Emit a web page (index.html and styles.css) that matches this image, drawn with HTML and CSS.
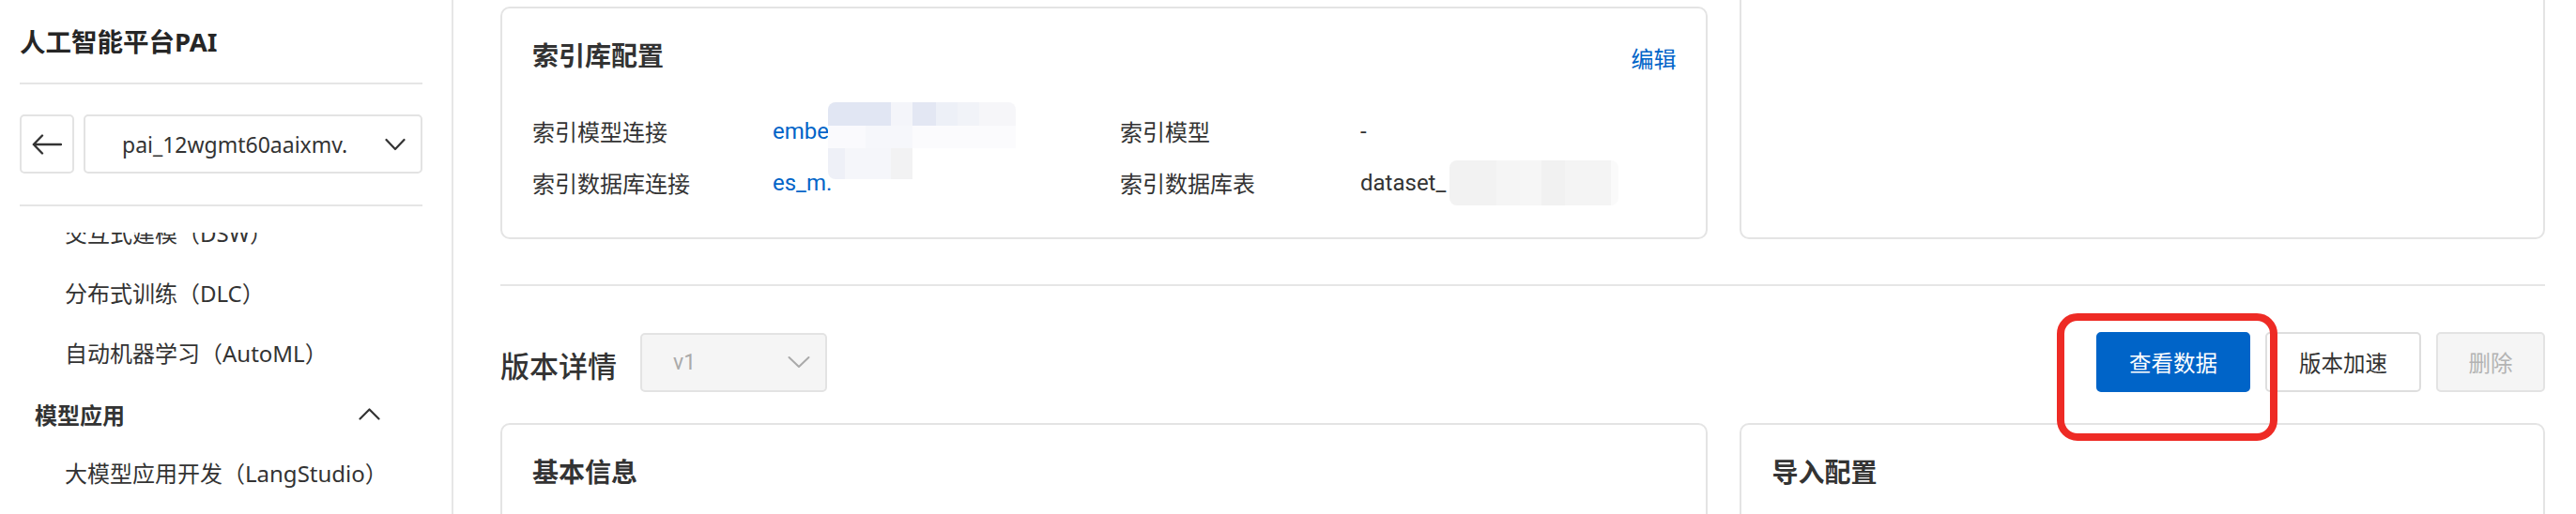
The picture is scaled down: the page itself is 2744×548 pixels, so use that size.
FILE: index.html
```html
<!DOCTYPE html>
<html lang="zh-CN">
<head>
    <meta charset="UTF-8">
    <meta name="viewport" content="width=device-width, initial-scale=1.0">
    <title>人工智能平台PAI - 数据集详情</title>
    <link rel="stylesheet" href="styles.css">
</head>
<body>
    <aside class="sidebar">
        <div class="brand">人工智能平台PAI</div>
        <div class="switcher">
            <button class="back-btn">
                <svg width="32" height="22" viewBox="0 0 32 22"><path d="M31 11H2M11 1.5L1.8 11l9.2 9.5" fill="none" stroke="#333" stroke-width="2.4" stroke-linecap="round" stroke-linejoin="round"/></svg>
            </button>
            <div class="ws-select">
                <span class="ws-name">pai_12wgmt60aaixmv.</span>
                <svg width="22" height="14" viewBox="0 0 22 14"><path d="M1.5 2l9.5 10 9.5-10" fill="none" stroke="#333" stroke-width="2.2" stroke-linecap="round" stroke-linejoin="round"/></svg>
            </div>
        </div>
        <nav class="menu">
            <ul class="menu-list">
                <li class="menu-item">交互式建模（DSW）</li>
                <li class="menu-item">分布式训练（DLC）</li>
                <li class="menu-item">自动机器学习（AutoML）</li>
                <li class="menu-group">
                    <span>模型应用</span>
                    <svg width="23" height="13" viewBox="0 0 23 13"><path d="M1.5 11.5l10-10 10 10" fill="none" stroke="#333" stroke-width="2.2" stroke-linecap="round" stroke-linejoin="round"/></svg>
                </li>
                <li class="menu-item">大模型应用开发（LangStudio）</li>
            </ul>
        </nav>
    </aside>

    <main class="main">
        <div class="top-row">
            <section class="card card-index">
                <div class="card-head">
                    <h3 class="card-title">索引库配置</h3>
                    <a class="link">编辑</a>
                </div>
                <div class="info-grid">
                    <div class="info-cell">
                        <span class="info-label">索引模型连接</span>
                        <span class="info-value link">embe<span class="mask mask-model"></span></span>
                    </div>
                    <div class="info-cell">
                        <span class="info-label">索引模型</span>
                        <span class="info-value">-</span>
                    </div>
                    <div class="info-cell">
                        <span class="info-label">索引数据库连接</span>
                        <span class="info-value link">es_m.</span>
                    </div>
                    <div class="info-cell">
                        <span class="info-label">索引数据库表</span>
                        <span class="info-value">dataset_<span class="mask mask-table"></span></span>
                    </div>
                </div>
            </section>
            <section class="card card-side"></section>
        </div>

        <div class="divider"></div>

        <div class="version-bar">
            <h2 class="version-title">版本详情</h2>
            <div class="version-select">
                <span>v1</span>
                <svg width="24" height="14" viewBox="0 0 24 14"><path d="M1.5 2l10.5 10 10.5-10" fill="none" stroke="#aaa" stroke-width="2" stroke-linecap="round" stroke-linejoin="round"/></svg>
            </div>
            <div class="actions">
                <span class="mark-wrap">
                    <button class="btn btn-primary">查看数据</button>
                    <span class="mark"></span>
                </span>
                <button class="btn">版本加速</button>
                <button class="btn btn-disabled">删除</button>
            </div>
        </div>

        <div class="bottom-row">
            <section class="card card-low">
                <div class="card-head">
                    <h3 class="card-title">基本信息</h3>
                </div>
            </section>
            <section class="card card-low">
                <div class="card-head">
                    <h3 class="card-title">导入配置</h3>
                </div>
            </section>
        </div>
    </main>
</body>
</html>
```

FILE: styles.css
```css
* { box-sizing: border-box; }
body { margin: 0; height: 548px; overflow: hidden; display: flex; background: #fff; color: #333; font-family: "Noto Sans", "Noto Sans CJK SC", sans-serif; }
ul { list-style: none; margin: 0; padding: 0; }
h2, h3 { margin: 0; }

/* sidebar */
.sidebar { width: 483px; flex-shrink: 0; border-right: 2px solid #e6e6e6; padding: 0 31px 0 21px; display: flex; flex-direction: column; }
.brand { height: 90px; border-bottom: 2px solid #e5e5e5; display: flex; align-items: center; padding-bottom: 2px; font-size: 27.5px; font-weight: 700; color: #262626; }
.switcher { display: flex; gap: 10px; padding: 32px 0 33px; border-bottom: 2px solid #e5e5e5; }
.back-btn { width: 58px; height: 63px; background: #fff; border: 2px solid #e3e3e3; border-radius: 5px; display: flex; align-items: center; justify-content: center; padding: 0; }
.ws-select { flex: 1; height: 63px; border: 2px solid #e3e3e3; border-radius: 5px; display: flex; align-items: center; justify-content: space-between; padding: 0 16px 0 39px; font-size: 23px; color: #333; }
.menu { margin-top: 28px; flex: 1; overflow: hidden; }
.menu-list { margin-top: -31px; font-size: 24px; }
.menu-item { height: 64px; line-height: 64px; padding-left: 48px; color: #333; white-space: nowrap; }
.menu-group { height: 64px; display: flex; align-items: center; justify-content: space-between; padding: 0 45px 0 16px; font-weight: 700; color: #333; }

/* main */
.main { flex: 1; height: 548px; overflow: hidden; padding: 0 33px 0 50px; font-family: Roboto, "Noto Sans CJK SC", sans-serif; }
.top-row { display: grid; grid-template-columns: 3fr 2fr; gap: 34px; margin-top: -20px; }
.card { border: 2px solid #e4e4e4; border-radius: 10px; background: #fff; padding: 0 32px; }
.card-index { margin-top: 27px; height: 248px; }
.card-head { display: flex; justify-content: space-between; align-items: center; padding-top: 34px; height: 70px; }
.card-title { font-size: 28px; font-weight: 600; line-height: 36px; color: #333; }
.link { color: #0064c8; font-size: 24px; text-decoration: none; }
.info-grid { display: grid; grid-template-columns: 626px 1fr; margin-top: 33px; font-size: 24px; }
.info-cell { display: flex; height: 55px; align-items: center; }
.info-label { width: 256px; flex-shrink: 0; color: #333; }
.info-value { position: relative; color: #333; }
.info-value.link { color: #0064c8; }

/* pixelated masking over hidden values */
.mask { position: absolute; border-radius: 8px; }
.mask-model { left: 59px; top: -17px; width: 200px; height: 82px;
    background:
        linear-gradient(to right, #e1e6f3 0 67px, #f4f5fa 67px 90px, #e3e7f3 90px 115px, #edf0f7 115px 138px, #f1f3f8 138px 161px, #f6f6f9 161px) 0 0 / 100% 25px no-repeat,
        linear-gradient(to right, #fafafd 0 40px, #f6f7fb 40px 90px, #fbfbfd 90px) 0 25px / 100% 24px no-repeat,
        linear-gradient(to right, #eef0f7 0 18px, #f5f6fa 18px 67px, #f2f2f3 67px 90px, transparent 90px) 0 49px / 100% 33px no-repeat; }
.mask-table { left: 95px; top: -10px; width: 180px; height: 48px;
    background: linear-gradient(to right, #f2f2f2 0 50px, #f5f5f5 50px 75px, #f6f6f6 75px 98px, #f1f1f1 98px 123px, #f4f4f4 123px 172px, #fafafa 172px); }

.divider { height: 2px; background: #e6e6e6; margin-top: 48px; }

.version-bar { display: flex; align-items: center; height: 64px; margin-top: 49px; }
.version-title { font-size: 31px; font-weight: 500; color: #333; padding-top: 5px; }
.version-select { width: 199px; height: 63px; margin-left: 25px; background: #f5f5f5; border: 2px solid #e3e3e3; border-radius: 5px; display: flex; align-items: center; justify-content: space-between; padding: 0 16px 0 33px; font-size: 23px; color: #aaa; }
.actions { margin-left: auto; display: flex; gap: 16px; }
.btn { height: 64px; min-width: 116px; padding: 0 34px; border: 2px solid #dedede; border-radius: 5px; background: #fff; color: #333; font-size: 23.5px; white-space: nowrap; font-family: Roboto, "Noto Sans CJK SC", sans-serif; }
.btn-primary { background: #0064c8; border-color: #0064c8; color: #fff; width: 164px; padding: 0; }
.btn-disabled { background: #f5f5f5; border-color: #e3e3e3; color: #b3b3b3; padding: 0; }
.mark-wrap { position: relative; display: flex; }
.mark { position: absolute; left: -42px; top: -20px; width: 235px; height: 136px; border: 8px solid #ee2b25; border-radius: 22px; pointer-events: none; }

.bottom-row { display: grid; grid-template-columns: 3fr 2fr; gap: 34px; margin-top: 33px; }
.card-low { height: 220px; }
```
